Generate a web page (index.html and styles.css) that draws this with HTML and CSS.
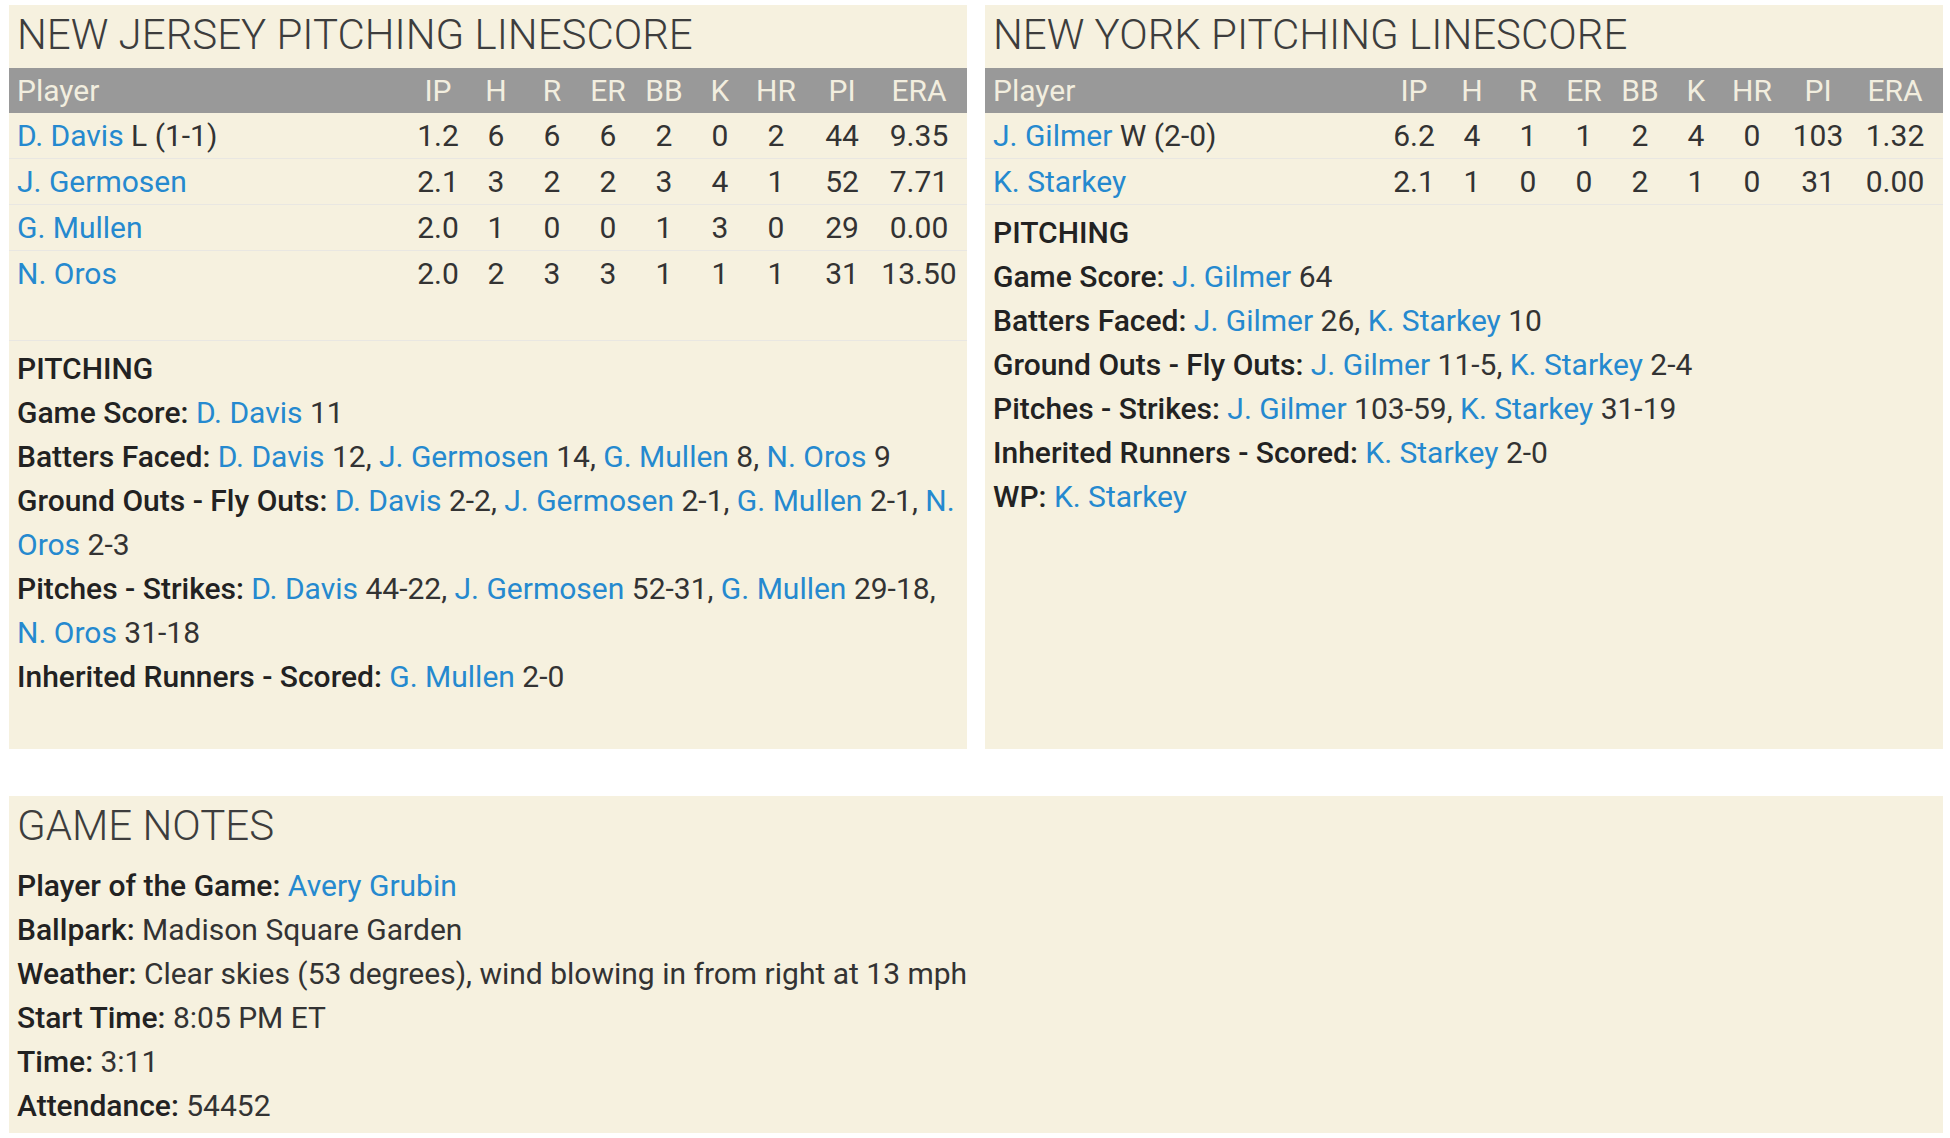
FILE: index.html
```html
<!DOCTYPE html>
<html lang="en">
<head>
<meta charset="utf-8">
<title>Pitching Linescore</title>
<link rel="stylesheet" href="styles.css">
</head>
<body>
<div class="page">
  <div class="top">
    <section class="panel">
      <h2 class="panel-title">NEW JERSEY PITCHING LINESCORE</h2>
      <div class="linescore">
        <div class="ls-row ls-head">
          <span class="c-player">Player</span><span>IP</span><span>H</span><span>R</span><span>ER</span><span>BB</span><span>K</span><span>HR</span><span>PI</span><span>ERA</span>
        </div>
        <div class="ls-row">
          <span class="c-player"><a href="#">D. Davis</a> L (1-1)</span><span>1.2</span><span>6</span><span>6</span><span>6</span><span>2</span><span>0</span><span>2</span><span>44</span><span>9.35</span>
        </div>
        <div class="ls-row">
          <span class="c-player"><a href="#">J. Germosen</a></span><span>2.1</span><span>3</span><span>2</span><span>2</span><span>3</span><span>4</span><span>1</span><span>52</span><span>7.71</span>
        </div>
        <div class="ls-row">
          <span class="c-player"><a href="#">G. Mullen</a></span><span>2.0</span><span>1</span><span>0</span><span>0</span><span>1</span><span>3</span><span>0</span><span>29</span><span>0.00</span>
        </div>
        <div class="ls-row ls-noborder">
          <span class="c-player"><a href="#">N. Oros</a></span><span>2.0</span><span>2</span><span>3</span><span>3</span><span>1</span><span>1</span><span>1</span><span>31</span><span>13.50</span>
        </div>
        <div class="ls-row ls-empty"></div>
      </div>
      <div class="notes">
        <p class="notes-head">PITCHING</p>
        <p><b>Game Score:</b> <a href="#">D. Davis</a> 11</p>
        <p><b>Batters Faced:</b> <a href="#">D. Davis</a> 12, <a href="#">J. Germosen</a> 14, <a href="#">G. Mullen</a> 8, <a href="#">N. Oros</a> 9</p>
        <p><b>Ground Outs - Fly Outs:</b> <a href="#">D. Davis</a> 2-2, <a href="#">J. Germosen</a> 2-1, <a href="#">G. Mullen</a> 2-1, <a href="#">N. Oros</a> 2-3</p>
        <p><b>Pitches - Strikes:</b> <a href="#">D. Davis</a> 44-22, <a href="#">J. Germosen</a> 52-31, <a href="#">G. Mullen</a> 29-18, <a href="#">N. Oros</a> 31-18</p>
        <p><b>Inherited Runners - Scored:</b> <a href="#">G. Mullen</a> 2-0</p>
      </div>
    </section>
    <section class="panel">
      <h2 class="panel-title">NEW YORK PITCHING LINESCORE</h2>
      <div class="linescore">
        <div class="ls-row ls-head">
          <span class="c-player">Player</span><span>IP</span><span>H</span><span>R</span><span>ER</span><span>BB</span><span>K</span><span>HR</span><span>PI</span><span>ERA</span>
        </div>
        <div class="ls-row">
          <span class="c-player"><a href="#">J. Gilmer</a> W (2-0)</span><span>6.2</span><span>4</span><span>1</span><span>1</span><span>2</span><span>4</span><span>0</span><span>103</span><span>1.32</span>
        </div>
        <div class="ls-row">
          <span class="c-player"><a href="#">K. Starkey</a></span><span>2.1</span><span>1</span><span>0</span><span>0</span><span>2</span><span>1</span><span>0</span><span>31</span><span>0.00</span>
        </div>
      </div>
      <div class="notes">
        <p class="notes-head">PITCHING</p>
        <p><b>Game Score:</b> <a href="#">J. Gilmer</a> 64</p>
        <p><b>Batters Faced:</b> <a href="#">J. Gilmer</a> 26, <a href="#">K. Starkey</a> 10</p>
        <p><b>Ground Outs - Fly Outs:</b> <a href="#">J. Gilmer</a> 11-5, <a href="#">K. Starkey</a> 2-4</p>
        <p><b>Pitches - Strikes:</b> <a href="#">J. Gilmer</a> 103-59, <a href="#">K. Starkey</a> 31-19</p>
        <p><b>Inherited Runners - Scored:</b> <a href="#">K. Starkey</a> 2-0</p>
        <p><b>WP:</b> <a href="#">K. Starkey</a></p>
      </div>
    </section>
  </div>
  <section class="panel game-notes">
    <h2 class="panel-title">GAME NOTES</h2>
    <div class="notes notes-game">
      <p><b>Player of the Game:</b> <a href="#">Avery Grubin</a></p>
      <p><b>Ballpark:</b> Madison Square Garden</p>
      <p><b>Weather:</b> Clear skies (53 degrees), wind blowing in from right at 13 mph</p>
      <p><b>Start Time:</b> 8:05 PM ET</p>
      <p><b>Time:</b> 3:11</p>
      <p><b>Attendance:</b> 54452</p>
    </div>
  </section>
</div>
</body>
</html>
```

FILE: styles.css
```css
html, body {
  margin: 0;
  padding: 0;
  background: #ffffff;
}

body {
  font-family: Roboto, "Liberation Sans", sans-serif;
  font-size: 30px;
  color: #333333;
}

a {
  color: #2589cf;
  text-decoration: none;
}

b {
  font-weight: 500;
  color: #222222;
}

.page {
  padding: 5px 7px 0 9px;
}

.top {
  display: grid;
  grid-template-columns: 1fr 1fr;
  gap: 18px;
}

.panel {
  background: #f6f1df;
}

.panel-title {
  margin: 0;
  padding: 1px 8px 4px;
  height: 58px;
  line-height: 58px;
  font-size: 42px;
  font-weight: 300;
  color: #3d3d3d;
  letter-spacing: 0;
}

.ls-row {
  display: grid;
  grid-template-columns: 1fr 60px 56px 56px 56px 56px 56px 56px 76px 78px;
  padding: 0 9px 0 8px;
  height: 45px;
  line-height: 45px;
  border-bottom: 1px solid #e9e7e2;
}

.ls-row span {
  text-align: center;
  white-space: nowrap;
}

.ls-row .c-player {
  text-align: left;
}

.ls-head {
  background: #999999;
  color: #f2eedf;
  border-bottom: none;
}

.ls-noborder {
  border-bottom: none;
}

.ls-empty {
  height: 44px;
}

.notes {
  padding: 6px 8px 50px;
}

.notes p {
  margin: 0;
  line-height: 44px;
}

.notes-head {
  font-weight: 500;
  color: #222222;
}

.game-notes {
  margin-top: 47px;
}

.notes-game {
  padding-top: 5px;
  padding-bottom: 5px;
}
```
